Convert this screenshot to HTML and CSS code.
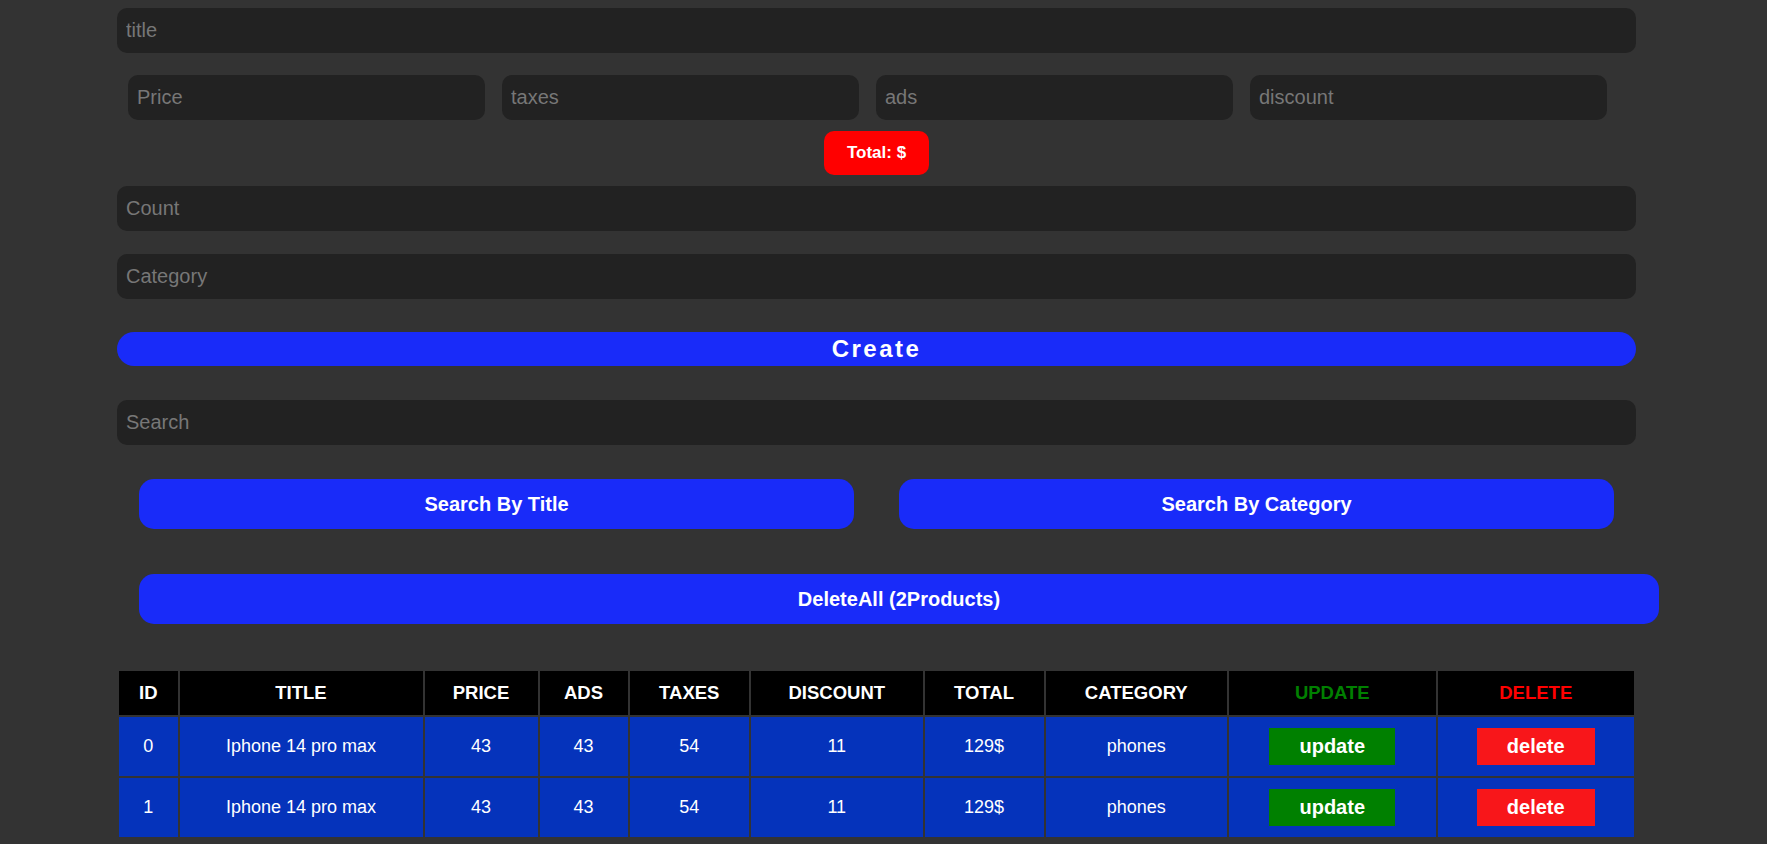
FILE: index.html
```html
<!DOCTYPE html>
<html>
<head>
<meta charset="utf-8">
<title>CRUD</title>
<link rel="stylesheet" href="styles.css">
</head>
<body>
<div class="crud">
  <div class="inputs">
    <input class="field field-title" type="text" placeholder="title">
    <div class="price-row">
      <input class="field field-small" type="number" placeholder="Price">
      <input class="field field-small" type="number" placeholder="taxes">
      <input class="field field-small" type="number" placeholder="ads">
      <input class="field field-small" type="number" placeholder="discount">
    </div>
    <div class="total-row"><small class="total">Total: $</small></div>
    <input class="field field-count" type="number" placeholder="Count">
    <input class="field field-category" type="text" placeholder="Category">
    <button class="btn-create">Create</button>
  </div>
  <div class="outputs">
    <input class="field field-search" type="text" placeholder="Search">
    <div class="search-row">
      <button class="btn-blue btn-search">Search By Title</button>
      <button class="btn-blue btn-search">Search By Category</button>
    </div>
    <div class="delete-all-row">
      <button class="btn-blue btn-delete-all">DeleteAll (2Products)</button>
    </div>
    <table class="products">
      <colgroup>
        <col class="c-id"><col class="c-title"><col class="c-price"><col class="c-ads"><col class="c-taxes"><col class="c-discount"><col class="c-total"><col class="c-category"><col class="c-update"><col class="c-delete">
      </colgroup>
      <thead>
        <tr>
          <th>ID</th><th>TITLE</th><th>PRICE</th><th>ADS</th><th>TAXES</th><th>DISCOUNT</th><th>TOTAL</th><th>CATEGORY</th><th class="th-update">UPDATE</th><th class="th-delete">DELETE</th>
        </tr>
      </thead>
      <tbody>
        <tr>
          <td>0</td><td>Iphone 14 pro max</td><td>43</td><td>43</td><td>54</td><td>11</td><td>129$</td><td>phones</td>
          <td><button class="btn-update">update</button></td>
          <td><button class="btn-delete">delete</button></td>
        </tr>
        <tr>
          <td>1</td><td>Iphone 14 pro max</td><td>43</td><td>43</td><td>54</td><td>11</td><td>129$</td><td>phones</td>
          <td><button class="btn-update">update</button></td>
          <td><button class="btn-delete">delete</button></td>
        </tr>
      </tbody>
    </table>
  </div>
</div>
</body>
</html>
```
FILE: styles.css
```css
* { box-sizing: border-box; }

html, body {
  margin: 0;
  padding: 0;
  background: #333333;
  font-family: "Liberation Sans", Arial, sans-serif;
  color: #fff;
  overflow: hidden;
}

body { padding-top: 8px; }

.crud {
  width: 1519px;
  margin-left: 117px;
}

.inputs, .outputs {
  display: flex;
  flex-direction: column;
}

.field {
  display: block;
  height: 45px;
  width: 100%;
  background: #222222;
  border: none;
  outline: none;
  border-radius: 10px;
  padding: 0 9px;
  font-family: "Liberation Sans", Arial, sans-serif;
  font-size: 20px;
  color: #fff;
}

.field::placeholder { color: #777777; }

input[type=number]::-webkit-inner-spin-button,
input[type=number]::-webkit-outer-spin-button { -webkit-appearance: none; margin: 0; }

.price-row {
  display: flex;
  gap: 17px;
  padding-left: 11px;
  margin-top: 22px;
}

.field-small { width: 357px; }

.total-row {
  display: flex;
  justify-content: center;
  margin-top: 11px;
}

.total {
  display: block;
  height: 44px;
  line-height: 44px;
  padding: 0 23px;
  background: #ff0000;
  border-radius: 10px;
  font-size: 17px;
  font-weight: bold;
  color: #fff;
}

.field-count { margin-top: 11px; }
.field-category { margin-top: 23px; }

.btn-create {
  margin-top: 33px;
  height: 34px;
  width: 100%;
  border: none;
  border-radius: 17px;
  background: #192bf9;
  color: #fff;
  font-family: "Liberation Sans", Arial, sans-serif;
  font-size: 24px;
  font-weight: bold;
  letter-spacing: 2.5px;
  line-height: 34px;
  padding: 0;
}

.field-search { margin-top: 34px; }

.search-row {
  display: flex;
  gap: 45px;
  margin-top: 34px;
  padding-left: 22px;
}

.btn-blue {
  height: 50px;
  border: none;
  border-radius: 15px;
  background: #192bf9;
  color: #fff;
  font-family: "Liberation Sans", Arial, sans-serif;
  font-size: 20px;
  font-weight: bold;
  padding: 0;
}

.btn-search { width: 715px; }

.delete-all-row {
  margin-top: 45px;
  padding-left: 22px;
}

.btn-delete-all { width: 1520px; }

.products {
  margin-top: 45px;
  width: 1519px;
  table-layout: fixed;
  border-spacing: 2px;
  border-collapse: separate;
  font-size: 18px;
}

.c-id { width: 58.5px; }
.c-title { width: 243px; }
.c-price { width: 113px; }
.c-ads { width: 88px; }
.c-taxes { width: 119.5px; }
.c-discount { width: 171.5px; }
.c-total { width: 119px; }
.c-category { width: 181.5px; }
.c-update { width: 206.5px; }
.c-delete { width: 196.5px; }

.products th {
  height: 44px;
  padding: 0;
  background: #000;
  color: #fff;
  font-weight: bold;
  font-size: 18.5px;
  text-align: center;
}

.products th.th-update { color: #008000; }
.products th.th-delete { color: #ff0000; }

.products td {
  height: 59px;
  padding: 0;
  background: #0533bb;
  color: #fff;
  text-align: center;
}

.btn-update, .btn-delete {
  height: 37px;
  padding: 0 30px;
  border: none;
  border-radius: 0;
  color: #fff;
  font-family: "Liberation Sans", Arial, sans-serif;
  font-size: 20px;
  font-weight: bold;
  vertical-align: middle;
}

.btn-update { background: #008000; }
.btn-delete { background: #f8161a; }
```
